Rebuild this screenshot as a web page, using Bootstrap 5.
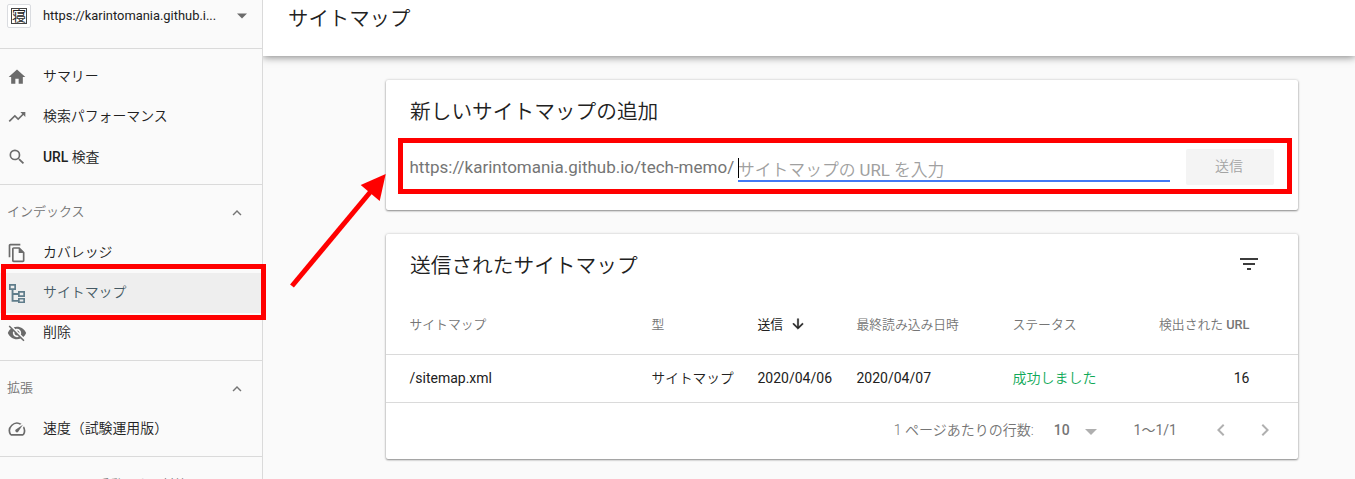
<!DOCTYPE html>
<html lang="ja">
<head>
<meta charset="utf-8">
<title>サイトマップ</title>
<link href="https://cdn.jsdelivr.net/npm/bootstrap@5.3.0/dist/css/bootstrap.min.css" rel="stylesheet">
<style>
body{font-family:Roboto,"Noto Sans CJK JP",sans-serif;font-size:14px;line-height:20px;color:#212121;background:#fafafa;height:479px;font-weight:400}
.side{width:263px;height:479px;border-right:1px solid #dadada}
.site{height:49px;padding:0 14px 17px 7px;font-size:12.9px}
.favi{width:24px;height:24px;border:1px solid #dadce0;border-radius:2px;background:#fff}
.favi span{width:16px;height:16px;border:1px solid #444;font-size:14px;line-height:14px;overflow:hidden}
.sect{border-top:1px solid #dadada;padding:8px 0 7px}
.item{height:40px;padding:0 0 2px 7px;font-size:13.9px}
.item svg{width:20px;height:20px;fill:#6b6b6b;margin-right:16px;position:relative;top:1px}
.item.chosen{background:#eee;color:#455a64}
.item.chosen svg{fill:#607d8b}
.head{height:40px;padding:0 16px 2px 7px;font-size:13px;color:#757575}
.jp-light{font-weight:350}
.topbar{height:56px;background:#fff;padding:0 25px 18px;font-size:20.4px;box-shadow:0 1px 8px rgba(0,0,0,.5);clip-path:inset(0 0 -12px 0)}
.panel{width:912px;margin-left:123px;background:#fff;border-radius:2px;box-shadow:0 1px 2px rgba(0,0,0,.4),0 0 3px rgba(0,0,0,.18)}
.ttl{font-size:20.7px;height:62px}
.prefix{font-size:17px;color:#757575;width:328px;white-space:nowrap;margin-left:-.5px;margin-right:.5px}
.entry{width:432px;height:33px;border-bottom:2px solid #4279f4;font-size:16.8px;color:#a0a0a0;padding-top:11px}
.caret{left:0;top:9px;width:1px;height:20px;background:#000}
.send{width:88px;height:36px;background:#f4f4f4;border-radius:2px;color:#a3a3a3;margin-left:16px;padding:0 2px 2px 0}
.grid-table{table-layout:fixed;border-collapse:collapse;width:912px}
.grid-table th{height:58px;font-size:12.8px;font-weight:350;color:#757575;border-bottom:1px solid #dadada;padding:0}
.grid-table td{height:48px;border-bottom:1px solid #dadada;padding:0}
.grid-table tr>:first-child{padding-left:23.5px}
.grid-table tr>:last-child{padding-right:48.5px;text-align:right}
.foot{height:55px;color:#757575;padding-right:24px}
.frame{border:5px solid #f00;pointer-events:none}
.f1{left:1px;top:264px;width:265px;height:56px}
.f2{left:398px;top:138px;width:894px;height:56px}
.arrow{left:280px;top:165px}
</style>
<script src="https://cdn.jsdelivr.net/npm/bootstrap@5.3.0/dist/js/bootstrap.bundle.min.js"></script>
</head>
<body class="position-relative overflow-hidden">
<div class="d-flex">
  <nav class="side flex-shrink-0 overflow-hidden">
    <div class="site d-flex align-items-center">
      <div class="favi d-flex align-items-center justify-content-center"><span class="d-flex align-items-center justify-content-center">寝</span></div>
      <span class="flex-grow-1" style="margin-left:12px">https://karintomania.github.i...</span>
      <svg width="12" height="6"><path d="M1 .5h10L6 5.5z" fill="#6b6b6b"/></svg>
    </div>
    <div class="sect" style="margin-top:-1px">
      <div class="item jp-light d-flex align-items-center"><svg viewBox="0 0 24 24"><path d="M10 20v-6h4v6h5v-8h3L12 3 2 12h3v8z"/></svg>サマリー</div>
      <div class="item jp-light d-flex align-items-center"><svg viewBox="0 0 24 24"><path d="M16 6l2.29 2.29-4.88 4.88-4-4L2 16.59 3.41 18l6-6 4 4 6.3-6.29L22 12V6z"/></svg>検索パフォーマンス</div>
      <div class="item jp-light d-flex align-items-center"><svg viewBox="0 0 24 24"><path d="M15.5 14h-.79l-.28-.27A6.47 6.47 0 0 0 16 9.5 6.5 6.5 0 1 0 9.5 16c1.61 0 3.09-.59 4.23-1.57l.27.28v.79l5 4.99L20.49 19zM9.5 14a4.5 4.5 0 1 1 0-9 4.5 4.5 0 0 1 0 9z"/></svg><span style="padding-top:1px"><span style="font-weight:500">URL</span> 検査</span></div>
    </div>
    <div class="sect">
      <div class="head jp-light d-flex align-items-center justify-content-between">インデックス<svg width="18" height="18" viewBox="0 0 24 24" style="margin-top:1px"><path d="M12 8l-6 6 1.41 1.41L12 10.83l4.59 4.58L18 14z" fill="#757575"/></svg></div>
      <div class="item jp-light d-flex align-items-center"><svg viewBox="0 0 24 24"><path d="M16 1H4c-1.1 0-2 .9-2 2v14h2V3h12zM15 5H8c-1.1 0-2 .9-2 2v14c0 1.1.9 2 2 2h11c1.1 0 2-.9 2-2V11zM8 21V7h6v5h5v9z"/></svg>カバレッジ</div>
      <div class="item jp-light chosen d-flex align-items-center"><svg viewBox="0 0 20 20"><path fill-rule="evenodd" d="M2 1h7v6H6.5v3H11V8h7v6h-7v-2H6.500v5H11v-2h7v5h-7v-1.300H4.600V7H2zM3.700 2.700v2.600h3.600V2.700zM12.700 9.700v2.600h3.600V9.700zM12.700 16.500v2h3.600v-2z"/></svg>サイトマップ</div>
      <div class="item jp-light d-flex align-items-center"><svg viewBox="0 0 24 24"><path d="M12 7c2.760 0 5 2.240 5 5 0 .65-.13 1.260-.36 1.830l2.920 2.920c1.510-1.260 2.700-2.890 3.430-4.750-1.730-4.390-6-7.500-11-7.500-1.400 0-2.740.25-3.980.7l2.160 2.160C10.740 7.130 11.350 7 12 7zM2 4.270l2.280 2.280.46.46C3.080 8.300 1.780 10.020 1 12c1.730 4.390 6 7.500 11 7.500 1.550 0 3.030-.3 4.380-.84l.42.42L19.730 22 21 20.730 3.270 3zM7.530 9.800l1.550 1.550c-.05.21-.08.43-.08.65 0 1.660 1.340 3 3 3 .22 0 .44-.03.65-.08l1.550 1.550c-.67.33-1.410.53-2.200.53-2.760 0-5-2.240-5-5 0-.79.2-1.530.53-2.200zm4.310-.78l3.150 3.150.02-.16c0-1.660-1.340-3-3-3z"/></svg>削除</div>
    </div>
    <div class="sect">
      <div class="head jp-light d-flex align-items-center justify-content-between">拡張<svg width="18" height="18" viewBox="0 0 24 24" style="margin-top:1px"><path d="M12 8l-6 6 1.410 1.410L12 10.830l4.590 4.580L18 14z" fill="#757575"/></svg></div>
      <div class="item jp-light d-flex align-items-center"><svg viewBox="0 0 24 24"><path d="M20.380 8.570l-1.230 1.850a8 8 0 0 1-.22 7.580H5.070A8 8 0 0 1 15.580 6.850l1.850-1.230A10 10 0 0 0 3.350 19a2 2 0 0 0 1.720 1h13.850a2 2 0 0 0 1.740-1 10 10 0 0 0-.27-10.440zM10.590 15.410a2 2 0 0 0 2.830 0l5.660-8.490-8.490 5.660a2 2 0 0 0 0 2.830z"/></svg>速度（試験運用版）</div>
    </div>
    <div class="sect"><div class="head jp-light d-flex align-items-center" style="padding-bottom:0">セキュリティと手動による対策</div></div>
  </nav>
  <main class="flex-grow-1">
    <header class="topbar jp-light d-flex align-items-center">サイトマップ</header>
    <section class="panel" style="margin-top:24px;height:130px">
      <div class="ttl jp-light d-flex align-items-center px-4" style="padding-top:1px">新しいサイトマップの追加</div>
      <div class="d-flex px-4" style="padding-top:7px">
        <div class="prefix d-flex align-items-center" style="height:36px">https://karintomania.github.io/tech-memo/</div>
        <div class="entry jp-light position-relative">サイトマップの <span class="fw-normal">URL</span> を入力<i class="caret position-absolute"></i></div>
        <div class="send jp-light d-flex align-items-center justify-content-center">送信</div>
      </div>
    </section>
    <section class="panel" style="margin-top:24px;height:225px">
      <div class="ttl jp-light d-flex align-items-center justify-content-between" style="padding:1px 37px 0 24px">送信されたサイトマップ<svg width="24" height="24" viewBox="0 0 24 24" style="margin-top:-3px"><path d="M10 18h4v-2h-4zM3 6v2h18V6zm3 7h12v-2H6z" fill="#3c3c3c"/></svg></div>
      <table class="grid-table">
        <colgroup><col style="width:265.5px"><col style="width:106px"><col style="width:99px"><col style="width:156px"><col style="width:120px"><col></colgroup>
        <tr><th>サイトマップ</th><th>型</th><th style="color:#212121;font-weight:400">送信<svg width="16" height="16" viewBox="0 0 24 24" style="margin:-3px 0 0 7px"><path d="M20 12l-1.410-1.410L13 16.170V4h-2v12.170l-5.580-5.590L4 12l8 8z" fill="#212121" stroke="#212121" stroke-width=".6"/></svg></th><th>最終読み込み日時</th><th>ステータス</th><th>検出された <span style="font-weight:500">URL</span></th></tr>
        <tr><td>/sitemap.xml</td><td class="jp-light" style="font-size:13.7px">サイトマップ</td><td>2020/04/06</td><td>2020/04/07</td><td class="jp-light" style="color:#0fa958">成功しました</td><td>16</td></tr>
      </table>
      <div class="foot d-flex align-items-center justify-content-end">
        <span class="jp-light">1 ページあたりの行数:</span><span style="font-weight:500;margin-left:20px">10</span>
        <svg width="12" height="6" style="margin:3px 37px 0 15px"><path d="M0 0h12L6 6z" fill="#afafaf"/></svg>
        <span>1〜1/1</span>
        <svg width="24" height="24" viewBox="0 0 24 24" style="margin:-1px 0 0 32px"><path d="M15.410 7.410L14 6l-6 6 6 6 1.410-1.410L10.830 12z" fill="#b0b0b0"/></svg>
        <svg width="24" height="24" viewBox="0 0 24 24" style="margin:-1px -3px 0 20px"><path d="M10 6L8.590 7.410 13.170 12l-4.580 4.590L10 18l6-6z" fill="#b0b0b0"/></svg>
      </div>
    </section>
  </main>
</div>
<div class="frame f1 position-absolute"></div>
<div class="frame f2 position-absolute"></div>
<svg class="arrow position-absolute" width="110" height="130" viewBox="280 165 110 130"><path d="M292 286L372 190" stroke="#f00" stroke-width="5"/><path d="M385.700 174L360.700 185L379.700 201z" fill="#f00"/></svg>
</body>
</html>
